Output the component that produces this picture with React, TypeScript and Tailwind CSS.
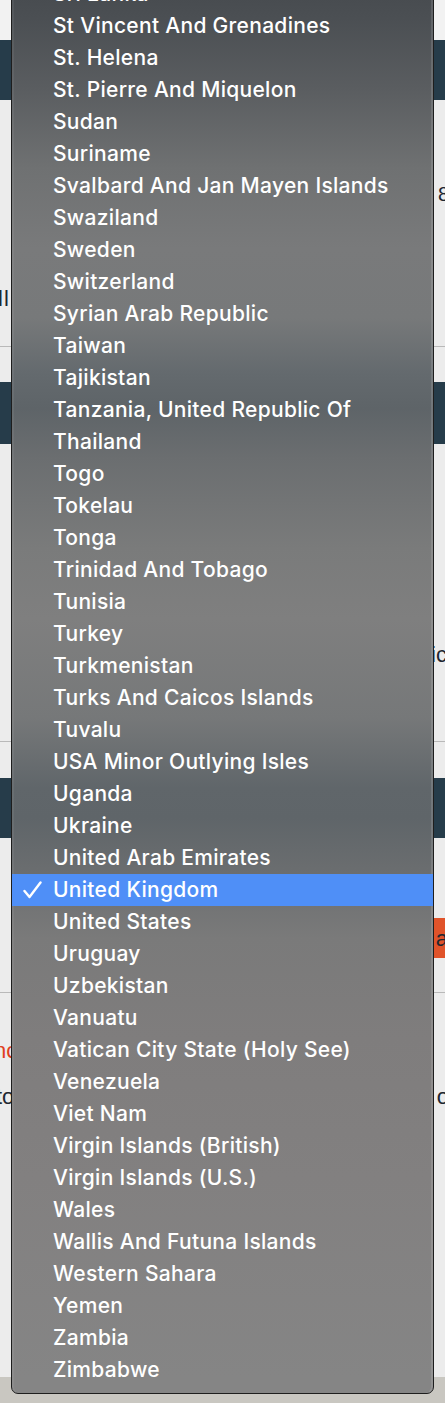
import React from "react";

const countries = [
  "Sri Lanka",
  "St Vincent And Grenadines",
  "St. Helena",
  "St. Pierre And Miquelon",
  "Sudan",
  "Suriname",
  "Svalbard And Jan Mayen Islands",
  "Swaziland",
  "Sweden",
  "Switzerland",
  "Syrian Arab Republic",
  "Taiwan",
  "Tajikistan",
  "Tanzania, United Republic Of",
  "Thailand",
  "Togo",
  "Tokelau",
  "Tonga",
  "Trinidad And Tobago",
  "Tunisia",
  "Turkey",
  "Turkmenistan",
  "Turks And Caicos Islands",
  "Tuvalu",
  "USA Minor Outlying Isles",
  "Uganda",
  "Ukraine",
  "United Arab Emirates",
  "United Kingdom",
  "United States",
  "Uruguay",
  "Uzbekistan",
  "Vanuatu",
  "Vatican City State (Holy See)",
  "Venezuela",
  "Viet Nam",
  "Virgin Islands (British)",
  "Virgin Islands (U.S.)",
  "Wales",
  "Wallis And Futuna Islands",
  "Western Sahara",
  "Yemen",
  "Zambia",
  "Zimbabwe",
];

function Check() {
  return (
    <svg width="19" height="18" viewBox="0 0 19 18" fill="none">
      <path
        d="M1.5 10 L6.5 16 L17.5 1.5"
        stroke="white"
        strokeWidth="2.4"
        strokeLinecap="round"
        strokeLinejoin="round"
      />
    </svg>
  );
}

function Page() {
  return (
    <div
      className="flex h-[1403px] w-[445px] flex-col bg-[#c9c7c1] text-[#1d2731]"
      style={{ fontFamily: "'Liberation Sans', Arial, sans-serif" }}
    >
      <div className="flex h-[1377px] flex-col bg-[#ececec]">
        <div className="h-[40px] bg-[#f2f2f2]" />
        <div className="h-[60px] bg-[#263c4a]" />
        <div className="flex h-[247px] flex-col border-b border-[#b9b9b9]">
          <div className="mt-[82px] flex h-[24px] items-center justify-end overflow-hidden text-[20px]">
            <span className="-mr-[4px]">8</span>
          </div>
          <div className="mt-[80px] flex h-[24px] items-center overflow-hidden text-[22px]">
            <span className="-ml-[2px] tracking-[1px]">ll</span>
          </div>
        </div>
        <div className="h-[35px]" />
        <div className="h-[62px] bg-[#263c4a]" />
        <div className="flex h-[298px] flex-col border-b border-[#b9b9b9]">
          <div className="mt-[198px] flex h-[24px] items-center justify-end overflow-hidden text-[22px]">
            <span className="-mr-[2px]">ic</span>
          </div>
        </div>
        <div className="h-[36px]" />
        <div className="h-[60px] bg-[#263c4a]" />
        <div className="flex h-[155px] flex-col border-b border-[#b9b9b9]">
          <div className="mt-[80px] flex justify-end">
            <div className="flex h-[40px] w-[60px] items-center justify-end overflow-hidden bg-[#e0532a] text-[22px]">
              <span className="-mr-[3px]">a</span>
            </div>
          </div>
        </div>
        <div className="flex flex-col">
          <div className="mt-[45px] flex h-[24px] items-center overflow-hidden text-[22px] text-[#e0401e]">
            <span className="-ml-[6px]">nc</span>
          </div>
          <div className="mt-[22px] flex h-[24px] items-center justify-between overflow-hidden text-[22px]">
            <span className="-ml-[4px]">to</span>
            <span className="-mr-[4px]">o</span>
          </div>
        </div>
      </div>
    </div>
  );
}

export default function App() {
  return (
    <div className="relative h-[1403px] w-[445px] overflow-hidden">
      <Page />
      <div
        className="absolute left-[11px] top-[-23px] w-[423px] rounded-b-[7px] border border-[#1e1e1e] pb-[7px] shadow-[inset_-2px_0_0_rgba(255,255,255,0.12),inset_2px_0_0_rgba(255,255,255,0.06)] bg-[linear-gradient(180deg,#45494d_0px,#4b4f53_40px,#5a5d60_110px,#6f7172_190px,#797a7b_270px,#77797a_340px,#646a6e_395px,#5e6468_430px,#6b6e70_480px,#7a7b7b_570px,#7f7f7f_640px,#767879_740px,#60666a_810px,#5f6569_840px,#6a6d6f_890px,#7a7a7a_960px,#7f7d7d_1060px,#828080_1200px,#858585_1400px)]"
        style={{ fontFamily: "Inter, 'Noto Sans', sans-serif" }}
      >
        {countries.map((c) => {
          const sel = c === "United Kingdom";
          return (
            <div
              key={c}
              className={`flex h-[32px] items-center text-[21px] font-medium tracking-[0.3px] text-white ${
                sel ? "bg-[#4f8ff7]" : ""
              }`}
            >
              <div className="flex w-[41px] pl-[11px]">
                {sel ? <Check /> : null}
              </div>
              <span className="whitespace-nowrap">{c}</span>
            </div>
          );
        })}
      </div>
    </div>
  );
}
